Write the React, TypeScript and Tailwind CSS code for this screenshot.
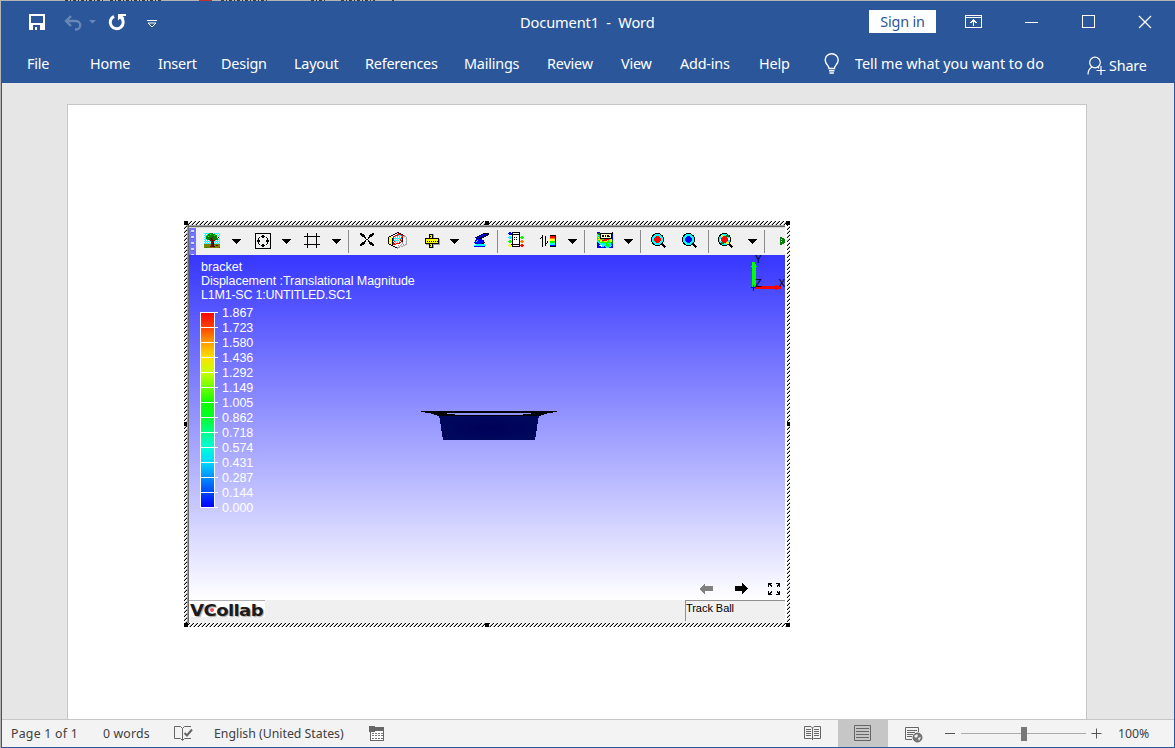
import React from "react";

const PALETTE: Record<string, string> = {
  k: "#000000", w: "#ffffff", c: "#00ffff", g: "#008000", l: "#00ff00", r: "#ff0000",
  b: "#0000ff", n: "#000080", y: "#ffff00", o: "#808000", m: "#800000", s: "#a0a0a0",
  t: "#40c0ff", a: "#ff8000", p: "#ffffc0",
};

function Pixels({ rows, className }: { rows: string[]; className?: string }) {
  const w = rows[0].length;
  return (
    <svg width={w} height={rows.length} viewBox={`0 0 ${w} ${rows.length}`} shapeRendering="crispEdges" className={`block shrink-0 ${className ?? ""}`}>
      {rows.flatMap((row, y) =>
        [...row].map((ch, x) => (PALETTE[ch] ? <rect key={`${x}-${y}`} x={x} y={y} width="1" height="1" fill={PALETTE[ch]} /> : null))
      )}
    </svg>
  );
}

const TREE = [
  "cwcwcggggwcwcwcw",
  "wcwcgglggggcwcwc",
  "cwcggggggglggwcw",
  "wcgglggggggggcwc",
  "cwggggggmggggwkw",
  "wcggggmmggggggwc",
  "cwcggmgmmggmggcw",
  "wcwcwcmmmmmcwcwc",
  "cwcwcwcmmmcwcwcw",
  "wcwcwcwmmkwcwcwc",
  "cwcwcwcmmkcwcwcw",
  "ooooooommkoooooo",
  "ooooooommkoommoo",
  "oooooommmkkooooo",
  "oogoooooooooooog",
];
const FIT = [
  "kkkkkkkkkkkkkkkk",
  "k..............k",
  "k......kk......k",
  "k.....kkkk.....k",
  "k...k..kk..k...k",
  "k..k........k..k",
  "k..k........k..k",
  "k.kkk......kkk.k",
  "k.kkk......kkk.k",
  "k..k........k..k",
  "k..k........k..k",
  "k...k..kk..k...k",
  "k.....kkkk.....k",
  "k......kk......k",
  "k..............k",
  "kkkkkkkkkkkkkkkk",
];
const CROSS = [
  "kk..........kk",
  "kkkk......kkkk",
  ".kkkk....kkkk.",
  "..kkk....kkk..",
  "....kk..kk....",
  ".....k..k.....",
  "......kk......",
  ".....k..k.....",
  "....kk..kk....",
  "..kkk....kkk..",
  ".kkkk....kkkk.",
  "kkkk......kkkk",
  "kk..........kk",
];
const CUBE = [
  ".........kk.........",
  ".......kkwrkk.......",
  ".....kkwwrrrrkk.....",
  "...kkwwrrrcwcrrks...",
  ".kkwwrrcwcwcwcr.ss..",
  "kyywwrwcwcwcwrr...s.",
  "kypykrcwcwcwcrk...s.",
  "kyypkrwcwcwcrwk...s.",
  "kpyykrcwcwcwrrk...s.",
  "kyypkwrcwcwcwrk...s.",
  "kypykrwcwcwrrws...s.",
  "kyypkrrwrrrrwws...s.",
  ".kkykrrrwwwwws.s.ss.",
  "...kkwwwwwsws..ss...",
  ".....kkwww.s.ss.....",
  ".......kksss........",
  ".........s..........",
];
const RULER = [
  "....kkkks......",
  "....kyyks......",
  "....kkyks......",
  "....kyyks......",
  "kkkkkkkkkkkkkk.",
  "kyyyyyyyyyyyyks",
  "kyyyyyyyyyyyyks",
  "kykykykykykykks",
  "kyyyyyyyyyyyyks",
  "kkkkkkkkkkkkkks",
  ".ssskyyksssssss",
  "....kkyks......",
  "....kyyks......",
  "....kkkks......",
];
const PROBE = [
  ".........kkkkkn",
  ".......nnbbnnnk",
  ".....nnbbnnnnk.",
  "...nnnbnnnnk...",
  ".nnbbnnkkk.....",
  "..nnnkkk.......",
  "..bbbbbk.......",
  ".bbcbbbbbk.....",
  ".bcbbbbbbk.....",
  "bbbbbbbbbbk....",
  ".bbbbbbbkk.....",
  "..ccccccccc....",
  "cccccccccccc...",
  "bbbbbbbbbbb....",
];
const LEGEND = [
  ".bb.kkkkkkkk....",
  "bbbbkwwwwwwk....",
  ".bbkkkkkkkkk....",
  "....kwwwwwwk....",
  ".cc.kwwwwwwk.ll.",
  "cccckwkwkwwkllll",
  ".cc.kwwwwwwk.ll.",
  "....kwkwkwwk....",
  ".ll.kwwwwwwk.aa.",
  "llllkwwwwwwkaaaa",
  ".ll.kwwwwwwk.aa.",
  "....kwwwwwwk....",
  ".yykkkkkkkkk.rr.",
  "yyyykwwwwwwkrrrr",
  ".yy.kkkkkkkk.rr.",
];
const BARS = [
  "..k.......kkkkkk",
  "..k..k....rrrrrk",
  ".kk..k....rrrrrk",
  "k.k..k....aaaaak",
  "..k..k....yyyyyk",
  "..k..k....yyyyyk",
  "..k..k.k..lllllk",
  "..k..k.k..lllllk",
  "..k..kk...ccccck",
  "..k..k....ccccck",
  "..k..k....bbbbbk",
  "..k.......kkkkkk",
];
const CONTOUR = [
  "bbb............k",
  "gggkkkkkkkkkkkkk",
  "cggkppppppppppkb",
  "cclkpkkpkpkkppkb",
  "cllkpkkpkpkkkpkb",
  "lylkppppppppppkb",
  "llykkkkkkkkkkkkb",
  "lyyaallrrrrrlyyb",
  "cllyyrrrrrylyyyg",
  "cclyyllyyylllyyg",
  "bcclllllllllllgg",
  "bbcccclcllccccgg",
  "bbbcccccclllccgb",
  "bbcwwcccllllcccb",
  "bbbbwccbccllccbb",
  "bbbbbbbbbcccbbbb",
];
const CARET = ["kkkkkkkkk", ".kkkkkkk.", "..kkkkk..", "...kkk...", "....k...."];
const PLAY = ["gg....", "gggg..", "gwgggg", "gggggg", "gwgggg", "gggggg", "gggg..", "gg...."];

function Caret({ className }: { className: string }) {
  return <Pixels rows={CARET} className={`mt-[7px] ${className}`} />;
}
function Sep({ className }: { className: string }) {
  return <i className={`mt-[-2px] block h-[23px] w-px shrink-0 bg-[#8a8a8a] ${className}`} />;
}
function Magnifier({ color, multi, className }: { color: string; multi?: boolean; className: string }) {
  return (
    <svg width="16" height="16" viewBox="0 0 16 16" className={`block shrink-0 ${className}`} shapeRendering="crispEdges">
      <path d="M10 10l4.500 4.500" stroke="#000" strokeWidth="2" />
      <circle cx="6.5" cy="6.5" r="6" fill="#00ffff" stroke="#000" />
      {multi && <path d="M3 2h3v2H3zM8 9h3v2H8z" fill="#ffff00" />}
      {multi && <path d="M8 2h3v2H8zM3 9h3v2H3z" fill="#008000" />}
      {multi && <path d="M2 6h2v2H2zM10 5h2v2h-2z" fill="#fff" />}
      <circle cx="6.5" cy="6.5" r="3.3" fill={color} />
    </svg>
  );
}

function Hatch() {
  return (
    <svg className="absolute inset-0" width="606" height="406" shapeRendering="crispEdges">
      <defs>
        <pattern id="hatch" width="4" height="4" patternUnits="userSpaceOnUse">
          <rect width="4" height="4" fill="#fff" />
          <path d="M3 0h1v1H3zM2 1h1v1H2zM1 2h1v1H1zM0 3h1v1H0z" fill="#000" />
          <path d="M2 0h1v1H2zM1 1h1v1H1zM0 2h1v1H0zM3 3h1v1H3z" fill="#b4b4b4" />
        </pattern>
      </defs>
      <path fillRule="evenodd" d="M0 0H606V406H0zM4 4V402H602V4z" fill="url(#hatch)" />
      <path d="M0 0h4v4H0zM301 0h4v4h-4zM602 0h4v4h-4zM0 201h4v4H0zM602 201h4v4h-4zM0 402h4v4H0zM301 402h4v4h-4zM602 402h4v4h-4z" fill="#000" />
    </svg>
  );
}

const VALUES = ["1.867", "1.723", "1.580", "1.436", "1.292", "1.149", "1.005", "0.862", "0.718", "0.574", "0.431", "0.287", "0.144", "0.000"];

function Viewer() {
  return (
    <div className="relative ml-[116px] mt-[116px] h-[406px] w-[606px] bg-[#f0f0f0] pt-[4px] pl-[3px]">
      <Hatch />
      <div className="relative flex h-[398px] w-[600px] border-r-2 border-r-white">
        <i className="w-px shrink-0 bg-[#a0a0a0]" />
        <i className="w-px shrink-0 bg-[#696969]" />
        <div className="flex w-[596px] flex-col bg-[#f0f0f0]">
          <i className="h-px shrink-0 bg-[#a0a0a0]" />
          <i className="h-px shrink-0 bg-[#606060]" />
          <i className="h-px shrink-0 bg-[#d8d8d8]" />
          <div className="flex h-[27px] shrink-0 items-start overflow-hidden">
            <div className="h-[27px] w-[7px] shrink-0 bg-[#7373ff] pl-[2px] pt-[2px]">
              <div className="h-[25px] w-[3px] bg-[repeating-linear-gradient(to_bottom,#d8d8ff_0px,#d8d8ff_2px,#5c5ce0_2px,#5c5ce0_3px,#7373ff_3px,#7373ff_6px)]" />
            </div>
            <div className="flex items-start pt-[4px]">
              <Pixels rows={TREE} className="ml-[8px] mt-[1px]" />
              <Caret className="ml-[12px]" />
              <Pixels rows={FIT} className="ml-[14px] mt-[1px]" />
              <Caret className="ml-[11px]" />
              <svg width="17" height="17" className="ml-[13px] block shrink-0" shapeRendering="crispEdges">
                <path d="M3 1h1v15H3zM12 1h1v15h-1zM0 4h16v1H0zM0 12h16v1H0z" />
              </svg>
              <Caret className="ml-[11px]" />
              <Sep className="ml-[7px]" />
              <Pixels rows={CROSS} className="ml-[11px] mt-[1px]" />
              <Pixels rows={CUBE} className="ml-[14px]" />
              <Pixels rows={RULER} className="ml-[17px] mt-[2px]" />
              <Caret className="ml-[10px]" />
              <Pixels rows={PROBE} className="ml-[15px] mt-[1px]" />
              <Sep className="ml-[8px]" />
              <Pixels rows={LEGEND} className="ml-[10px]" />
              <Pixels rows={BARS} className="ml-[16px] mt-[3px]" />
              <Caret className="ml-[12px]" />
              <Sep className="ml-[7px]" />
              <Pixels rows={CONTOUR} className="ml-[12px]" />
              <Caret className="ml-[11px]" />
              <Sep className="ml-[7px]" />
              <Magnifier color="#ff0000" className="ml-[10px] mt-[1px]" />
              <Magnifier color="#0000ff" className="ml-[15px] mt-[1px]" />
              <Sep className="ml-[10px]" />
              <Magnifier color="#ff0000" multi className="ml-[9px] mt-[1px]" />
              <Caret className="ml-[14px]" />
              <Sep className="ml-[7px]" />
              <Pixels rows={PLAY} className="ml-[15px] mt-[5px]" />
            </div>
          </div>
          <div className="relative flex h-[345px] shrink-0 flex-col overflow-hidden bg-[linear-gradient(#3636ff,#ffffff)] pl-[12px] pt-[5px] font-['Liberation_Sans',Arial,sans-serif] text-white">
            <div className="h-[42px] text-[12.5px] leading-[14px] whitespace-nowrap">
              <div className="tracking-[0.02px]">bracket</div>
              <div className="tracking-[-0.05px]">Displacement :Translational Magnitude</div>
              <div className="tracking-[-0.22px]">L1M1-SC 1:UNTITLED.SC1</div>
            </div>
            <div className="flex">
              <svg width="18" height="220" className="ml-[-1px] mt-[10px] block shrink-0" shapeRendering="crispEdges">
                <defs>
                  <linearGradient id="scale" x1="0" y1="0" x2="0" y2="1">
                    <stop offset="0" stopColor="#ff0000" />
                    <stop offset=".077" stopColor="#ff4000" />
                    <stop offset=".154" stopColor="#ff9a00" />
                    <stop offset=".231" stopColor="#ffe000" />
                    <stop offset=".308" stopColor="#c8ff00" />
                    <stop offset=".385" stopColor="#70ff00" />
                    <stop offset=".462" stopColor="#10ff00" />
                    <stop offset=".538" stopColor="#00ff28" />
                    <stop offset=".615" stopColor="#00ff88" />
                    <stop offset=".692" stopColor="#00ffd8" />
                    <stop offset=".77" stopColor="#00d8ff" />
                    <stop offset=".847" stopColor="#0090ff" />
                    <stop offset=".923" stopColor="#0048ff" />
                    <stop offset="1" stopColor="#0000ff" />
                  </linearGradient>
                </defs>
                <rect x="1" y="0" width="13" height="195" fill="url(#scale)" />
                <path d="M0 0h1v196H0zM14 0h1v196h-1z" fill="#fff" />
                {VALUES.map((v, i) => <rect key={v} x="0" y={i * 15} width="18" height="1" fill="#fff" />)}
              </svg>
              <div className="ml-[4px] mt-[4px] text-[12.5px] leading-[15px]">
                {VALUES.map((v) => <div key={v}>{v}</div>)}
              </div>
            </div>
            <svg className="absolute inset-0" width="596" height="345" viewBox="189 255 596 345" shapeRendering="crispEdges">
              <defs>
                <radialGradient id="body"><stop offset="0" stopColor="#000058" /><stop offset="1" stopColor="#00085c" /></radialGradient>
              </defs>
              <path d="M439 415H539L535 440H443z" fill="url(#body)" />
              <path fillRule="evenodd" d="M421 411H557V412L549 413L539 416H439L429 413L421 412zM447 413V414H455V415H523V414H531V413z" fill="#000" />
              <path d="M752 264h4v22h-3v-22zM751 266h6v1h-6zM752 262h3v26h-3z" fill="#00ff00" />
              <path d="M755 286h20v-1h2v1h4v3h-4v1h-2v-1h-20z" fill="#ff0000" />
              <path d="M751 287h5v1h-5zM753 285h1v6h-1z" fill="#0000ff" />
              <text x="755" y="287" fontSize="11" fill="#000" fontFamily="Liberation Sans">Z</text>
              <text x="755" y="263" fontSize="10" fill="#000" fontFamily="Liberation Sans">Y</text>
              <text x="778.500" y="287" fontSize="10" fill="#000" fontFamily="Liberation Sans">X</text>
              <path d="M699 589l6-6v3h8v5h-8v3z" fill="#808080" />
              <path d="M748 589l-6-6v3h-7v5h7v3z" fill="#000" />
              <path d="M768 583h4v1h-2l2 2-1 1-2-2v2h-1zM780 583h-4v1h2l-2 2 1 1 2-2v2h1zM768 595h4v-1h-2l2-2-1-1-2 2v-2h-1zM780 595h-4v-1h2l-2-2 1-1 2 2v-2h1z" fill="#000" />
            </svg>
          </div>
          <div className="flex h-[23px] shrink-0 justify-between">
            <div className="relative h-[17px] w-[76px] border-t border-[#b0b0b0] bg-white">
              <span className="block w-max origin-left scale-x-[1.1] pt-[1px] pl-[1px] font-['DejaVu_Sans',sans-serif] text-[16.5px] leading-[17px] font-bold tracking-[-0.6px] text-[#1c1c1c] [text-shadow:1px_1px_1px_#aaa]">VCollab</span>
              <i className="absolute top-[7px] left-[21px] size-[4px] rounded-full bg-[#f05060]" />
            </div>
            <div className="h-[21px] w-[100px] border-t border-l border-[#909090] font-['Liberation_Sans',Arial,sans-serif] text-[11px] leading-[14px] tracking-[-0.05px] text-black">Track Ball</div>
          </div>
        </div>
      </div>
    </div>
  );
}

const TABS = [
  ["File", "w-[23px] mr-[40px]"],
  ["Home", "w-[41px] mr-[27px]"],
  ["Insert", "w-[36px] mr-[27px]"],
  ["Design", "w-[46px] mr-[27px]"],
  ["Layout", "w-[44px] mr-[27px]"],
  ["References", "w-[72px] mr-[27px]"],
  ["Mailings", "w-[56px] mr-[27px]"],
  ["Review", "w-[47px] mr-[27px]"],
  ["View", "w-[32px] mr-[27px]"],
  ["Add-ins", "w-[52px] mr-[27px]"],
  ["Help", "w-[32px] mr-[33px]"],
];

function Header() {
  return (
    <header className="h-[82px] shrink-0 bg-[#2b579a] text-[14.4px] tracking-[-0.2px] whitespace-nowrap text-white">
      <div className="flex h-[42px] items-center">
        <svg width="140" height="24" className="ml-[26px] block shrink-0" fill="none">
          <path fillRule="evenodd" d="M1 4h16v16H1zM3 6v7h12V6zM5 15v5h7v-5z" fill="#fff" />
          <path d="M7 17h2v3H7z" fill="#fff" />
          <path d="M38 11h10a4 4 0 0 1 0 8.500h-1M43 6l-5 5 5 5" stroke="#6787b7" strokeWidth="2.400" />
          <path d="M61 10h7l-3.500 3.500z" fill="#6787b7" />
          <path d="M86 6.300a6.500 6.500 0 1 0 7 1" stroke="#fff" strokeWidth="3" />
          <path d="M90 4h8v2h-3.500l2 2-2.500 1.500-2-1-2 2z" fill="#fff" />
          <path d="M119 10.500h10" stroke="#fff" /><path d="M120 13h8l-4 4z" stroke="#fff" />
        </svg>
        <div className="ml-[352px] w-[138px] pt-[1px] text-[14.6px] tracking-[-0.12px] whitespace-pre">Document1  -  Word</div>
        <div className="mt-[-1px] ml-[211px] flex h-[23px] w-[67px] shrink-0 items-center justify-center bg-white text-[#2b579a]">Sign in</div>
        <svg width="190" height="20" className="mt-[-1px] ml-[29px] block shrink-0" fill="none" stroke="#fff" shapeRendering="crispEdges">
          <path d="M.5 3.500h16v12H.5zM0 5.500h17M8.500 14V8M5.500 11l3-3 3 3" />
          <path d="M60 10.500h13M117.500 3.500h12v12h-12z" />
          <path d="M174 4l12 12M186 4l-12 12" strokeWidth="1.300" shapeRendering="auto" />
        </svg>
      </div>
      <div className="flex h-[42px] items-center pl-[25px]">
        {TABS.map(([name, cls]) => <span key={name} className={`block shrink-0 ${cls}`}>{name}</span>)}
        <svg width="16" height="22" viewBox="0 0 16 22" fill="none" stroke="#fff" strokeWidth="1.400" className="shrink-0">
          <path d="M5 15.500c0-3-3.800-4-3.800-8.500a6.500 6.300 0 0 1 13 0c0 4.500-3.800 5.500-3.800 8.500zM5 17.700h5.400M5.500 20h4.400" />
        </svg>
        <span className="ml-[15px] w-[190px] shrink-0 tracking-[-0.04px]">Tell me what you want to do</span>
        <svg width="20" height="20" viewBox="0 0 20 20" fill="none" stroke="#fff" strokeWidth="1.200" className="mt-[3px] ml-[42px] shrink-0">
          <circle cx="8" cy="6.500" r="5.300" /><path d="M1 18.500c0-4 1.500-6 4-7.500M11 11l1 1.300M9.500 14.500h9M14 10v9" />
        </svg>
        <span className="mt-[4px] ml-[2px]">Share</span>
      </div>
    </header>
  );
}

function StatusBar() {
  return (
    <footer className="flex h-[28px] shrink-0 items-center border-t border-[#c6c6c6] bg-[#f3f3f3] text-[12.3px] whitespace-nowrap text-[#404040]">
      <span className="mt-[2px] ml-[9px] w-[67px] shrink-0 tracking-[0.26px]">Page 1 of 1</span>
      <span className="mt-[2px] ml-[25px] w-[48px] shrink-0 tracking-[0.15px]">0 words</span>
      <svg width="19" height="18" fill="none" stroke="#666" className="ml-[23px] shrink-0">
        <path d="M8.500 15.500L6.500 13.500H.5V1.500H6.500L8.500 3.500V15.500L10.500 13.500H17M8.500 3.500L10.500 1.500H17" /><path d="M10.500 8l2.500 2.500 5-6" strokeWidth="2" />
      </svg>
      <span className="mt-[2px] ml-[21px] w-[131px] shrink-0">English (United States)</span>
      <svg width="17" height="17" className="mt-[-1px] ml-[23px] shrink-0" shapeRendering="crispEdges">
        <path d="M2 7v8.500h13.500V3H7" fill="#fff" stroke="#666" /><path d="M7 2h9v4H7z" fill="#666" />
        <circle cx="4" cy="4" r="3.500" fill="#666" /><path d="M4 8.500h11M4 10.500h11M4 13.500h11" stroke="#777" strokeDasharray="2 1" />
      </svg>
      <svg width="18" height="18" fill="none" stroke="#666" className="mt-[-1px] ml-[419px] shrink-0">
        <path d="M8.500 15.500L7.500 14.500H.5V2.500H7L8.500 4L10 2.500h6.500v12h-7zM8.500 4v12M2 5.500h5M2 7.500h5M2 9.500h5M2 11.500h5M10 5.500h5M10 7.500h5M10 9.500h5M10 11.500h5" />
      </svg>
      <div className="ml-[16px] flex h-[27px] w-[50px] shrink-0 items-center justify-center bg-[#c6c6c6]">
        <svg width="18" height="17" fill="none" stroke="#666"><path d="M.5.5h16v15H.5zM2 3.500h13M2 6.500h13M2 9.500h13M2 12.500h13" /></svg>
      </div>
      <svg width="18" height="18" fill="none" stroke="#666" className="ml-[17px] shrink-0">
        <path d="M7 14.500H.5V2.500h13V7M2 5.500h10M2 7.500h8M2 9.500h6M2 11.500h5" /><circle cx="12.500" cy="12.500" r="4.500" fill="#777" stroke="#666" />
        <path d="M9 11l3-2 1 2-2 2zM13 13l3-1-2 4z" fill="#f3f3f3" stroke="none" />
      </svg>
      <i className="mt-[-1px] ml-[22px] h-px w-[10px] shrink-0 bg-[#555]" />
      <div className="ml-[6px] flex h-[14px] w-[125px] shrink-0 items-center justify-center bg-[linear-gradient(#ababab,#ababab)] bg-[length:100%_1px] bg-center bg-no-repeat"><i className="h-[14px] w-[6px] bg-[#777]" /></div>
      <svg width="11" height="11" stroke="#555" className="mt-[-1px] ml-[5px] shrink-0"><path d="M.5 5.500h10M5.500.5v10" /></svg>
      <span className="mt-[2px] ml-[16px]">100%</span>
    </footer>
  );
}

export default function App() {
  return (
    <div className="flex h-[748px] w-[1175px] flex-col overflow-hidden bg-[#b4b4b4] pl-px font-['Noto_Sans','Open_Sans',sans-serif]">
      <svg width="1174" height="1" className="block shrink-0" shapeRendering="crispEdges">
        <path d="M64 .5h38M109 .5h52M220 .5h46M310 .5h14M340 .5h34M391 .5h2" stroke="#3c3c3c" strokeDasharray="3 2 1 2" />
        <path d="M198 .5h13" stroke="#c03030" />
      </svg>
      <div className="flex h-[747px] flex-col border-r border-b border-l border-[#2b579a]">
        <Header />
        <main className="h-[636px] shrink-0 overflow-hidden bg-[#e6e6e6] pt-[21px] pl-[65px]">
          <div className="h-[640px] w-[1020px] border border-[#c6c6c6] bg-white">
            <Viewer />
          </div>
        </main>
        <StatusBar />
      </div>
    </div>
  );
}
